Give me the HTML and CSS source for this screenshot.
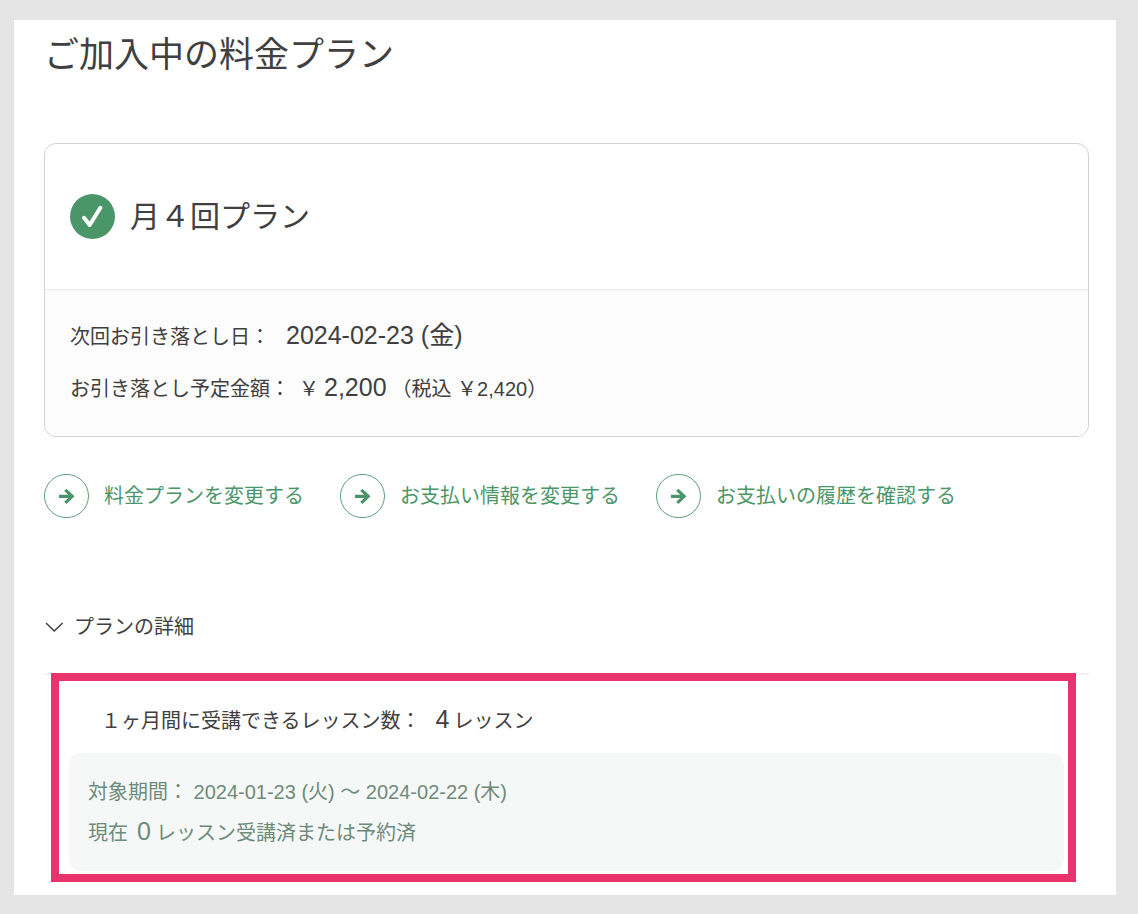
FILE: index.html
```
<!DOCTYPE html>
<html lang="ja">
<head>
<meta charset="utf-8">
<title>ご加入中の料金プラン</title>
<link rel="stylesheet" href="styles.css">
</head>
<body>

<main class="page">
<h1 class="page-title">ご加入中の料金プラン</h1>

<!-- current plan -->
<section class="plan">
    <div class="plan-head">
        <svg class="plan-check" viewBox="0 0 45 45" aria-hidden="true">
            <circle cx="22.5" cy="22.5" r="22.5" fill="#4a9669"/>
            <path d="M14 23.8 L19.7 31 L30.4 13.8" fill="none" stroke="#fff" stroke-width="4" stroke-linecap="round" stroke-linejoin="round"/>
        </svg>
        <h2 class="plan-name">月４回プラン</h2>
    </div>
    <dl class="plan-body">
        <div class="plan-row">
            <dt>次回お引き落とし日：</dt>
            <dd class="date"><span class="big">2024-02-23 (金)</span></dd>
        </div>
        <div class="plan-row">
            <dt>お引き落とし予定金額：</dt>
            <dd class="price">￥<span class="big amount">2,200</span>（税込 ￥2,420）</dd>
        </div>
    </dl>
</section>

<!-- links -->
<nav class="actions">
    <a class="action" href="#change-plan">
        <svg class="arrow" viewBox="0 0 45 44" aria-hidden="true">
            <rect x="0.5" y="0.5" width="44" height="43" rx="21.5" fill="none" stroke="#4a9669" stroke-width="0.9"/>
            <path d="M15 22.3 H28.5 M21.3 15.8 L28.2 22.3 L21.3 28.8" fill="none" stroke="#4a9669" stroke-width="3.2"/>
        </svg>
        料金プランを変更する</a>
    <a class="action" href="#change-payment">
        <svg class="arrow" viewBox="0 0 45 44" aria-hidden="true">
            <rect x="0.5" y="0.5" width="44" height="43" rx="21.5" fill="none" stroke="#4a9669" stroke-width="0.9"/>
            <path d="M15 22.3 H28.5 M21.3 15.8 L28.2 22.3 L21.3 28.8" fill="none" stroke="#4a9669" stroke-width="3.2"/>
        </svg>
        お支払い情報を変更する</a>
    <a class="action" href="#payment-history">
        <svg class="arrow" viewBox="0 0 45 44" aria-hidden="true">
            <rect x="0.5" y="0.5" width="44" height="43" rx="21.5" fill="none" stroke="#4a9669" stroke-width="0.9"/>
            <path d="M15 22.3 H28.5 M21.3 15.8 L28.2 22.3 L21.3 28.8" fill="none" stroke="#4a9669" stroke-width="3.2"/>
        </svg>
        お支払いの履歴を確認する</a>
</nav>

<!-- plan details -->
<details class="details" open>
    <summary class="details-title">
        <svg class="chevron" viewBox="0 0 20 12" aria-hidden="true">
            <path d="M2 2 L10.3 10 L18.6 2" fill="none" stroke="#404040" stroke-width="1.5"/>
        </svg>
        プランの詳細
    </summary>
    <div class="details-body">
        <div class="lessons">
            <p class="lessons-total">１ヶ月間に受講できるレッスン数：<span class="big count">4</span>レッスン</p>
            <div class="usage">
                <p>対象期間： 2024-01-23 (火) 〜 2024-02-22 (木)</p>
                <p>現在<span class="big used">0</span>レッスン受講済または予約済</p>
            </div>
        </div>
    </div>
</details>
</main>

</body>
</html>
```

FILE: styles.css
```
* {
    box-sizing: border-box;
}

body {
    margin: 0;
    padding: 20px 22px 19px 14px;
    font-family: "Liberation Sans", "Noto Sans CJK JP", sans-serif;
    font-size: 20px;
    line-height: 40px;
    color: #404040;
    background: #e5e5e5;
}

h1, h2, p, dl, dd {
    margin: 0;
    font-weight: normal;
}

.page {
    padding: 10px 27px 13px 30px;
    background: #fff;
}

.page-title {
    font-size: 35px;
    line-height: 50px;
}

.big {
    font-size: 25px;
    line-height: 24px;
}

/* current plan */
.plan {
    margin-top: 63px;
    border: 1px solid #d2d2d2;
    border-radius: 12px;
    overflow: hidden;
}

.plan-head {
    display: flex;
    align-items: center;
    gap: 15px;
    height: 146px;
    padding: 0 25px;
    border-bottom: 1px solid #ececec;
}

.plan-check {
    width: 45px;
    height: 45px;
}

.plan-name {
    font-size: 30px;
}

.plan-body {
    display: flex;
    flex-direction: column;
    gap: 12px;
    padding: 27px 25px;
    background: #fcfcfc;
}

.plan-row {
    display: flex;
    align-items: baseline;
    height: 40px;
}

.date {
    margin-left: 16px;
}

.price {
    margin-left: 9px;
}

.amount {
    margin: 0 5px;
}

/* links */
.actions {
    display: flex;
    flex-wrap: wrap;
    gap: 36px;
    margin-top: 37px;
}

.action {
    display: flex;
    align-items: center;
    gap: 15px;
    color: #4a9669;
    text-decoration: none;
}

.arrow {
    width: 45px;
    height: 44px;
}

/* plan details */
.details {
    margin-top: 89px;
}

.details-title {
    display: flex;
    align-items: center;
    gap: 10px;
    list-style: none;
    cursor: pointer;
}

.chevron {
    width: 20px;
    height: 12px;
}

.details-body {
    margin-top: 26px;
    padding: 0 13px 0 7px;
    background: linear-gradient(#eee, #fff) no-repeat;
    background-size: 100% 3px;
}

.lessons {
    padding: 20px 4px 3px 10px;
    border: 8px solid #e9336d;
    background: #fff;
}

.lessons-total {
    padding-left: 32px;
}

.count {
    margin: 0 4px 0 15px;
}

.usage {
    display: flex;
    flex-direction: column;
    gap: 1px;
    margin-top: 12px;
    padding: 19px 19px 18px;
    border-radius: 12px;
    color: #6d8b7b;
    background: #f6f8f7;
}

.used {
    margin: 0 5px 0 9px;
}
```
